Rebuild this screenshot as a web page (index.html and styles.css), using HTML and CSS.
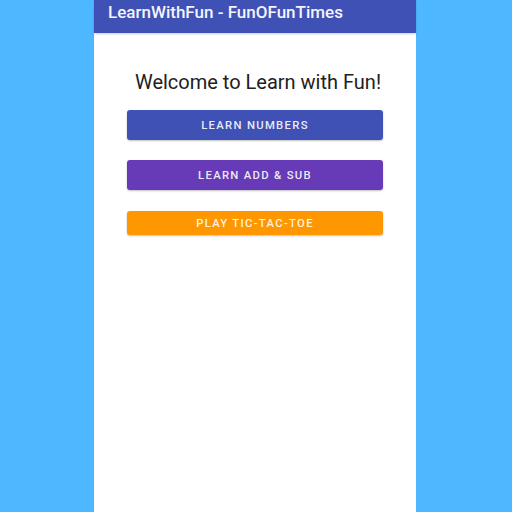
FILE: index.html
```html
<!DOCTYPE html>
<html>
<head>
<meta charset="utf-8">
<link rel="stylesheet" href="styles.css">
</head>
<body>
<div class="phone">
  <div class="appbar"><span class="title">LearnWithFun - FunOFunTimes</span></div>
  <div class="content">
    <div class="welcome">Welcome to Learn with Fun!</div>
    <div class="btn btn-blue">LEARN NUMBERS</div>
    <div class="btn btn-purple">LEARN ADD &amp; SUB</div>
    <div class="btn btn-orange">PLAY TIC-TAC-TOE</div>
  </div>
</div>
</body>
</html>
```
FILE: styles.css
```css
html, body {
  margin: 0;
  padding: 0;
  height: 100%;
}
body {
  background: #4db8ff;
  font-family: Roboto, "Liberation Sans", sans-serif;
  display: flex;
  justify-content: flex-start;
}
.phone {
  margin-left: 94px;
  width: 322px;
  height: 512px;
  background: #ffffff;
  display: flex;
  flex-direction: column;
}
.appbar {
  height: 33px;
  box-sizing: border-box;
  background: #3f51b5;
  padding: 2px 0 0 14px;
  box-shadow: 0 1px 2px rgba(0,0,0,0.2);
}
.title {
  color: #f4f4fb;
  font-size: 17px;
  font-weight: 500;
  line-height: 20px;
  display: block;
}
.content {
  display: flex;
  flex-direction: column;
  align-items: center;
  padding-top: 37px;
}
.welcome {
  font-size: 20px;
  line-height: 24px;
  color: #212121;
  padding-left: 6px;
  margin-bottom: 16px;
}
.btn {
  width: 256px;
  box-sizing: border-box;
  border-radius: 3px;
  color: rgba(255,255,255,0.9);
  font-size: 11.3px;
  font-weight: 500;
  letter-spacing: 1.3px;
  text-align: center;
  box-shadow: 0 1px 2px rgba(0,0,0,0.25);
}
.btn-blue {
  background: #3f51b5;
  height: 30px;
  line-height: 31px;
  margin-bottom: 20px;
}
.btn-purple {
  background: #673ab7;
  height: 30px;
  line-height: 31px;
  margin-bottom: 21px;
}
.btn-orange {
  background: #ff9800;
  height: 24px;
  line-height: 25px;
}
```
